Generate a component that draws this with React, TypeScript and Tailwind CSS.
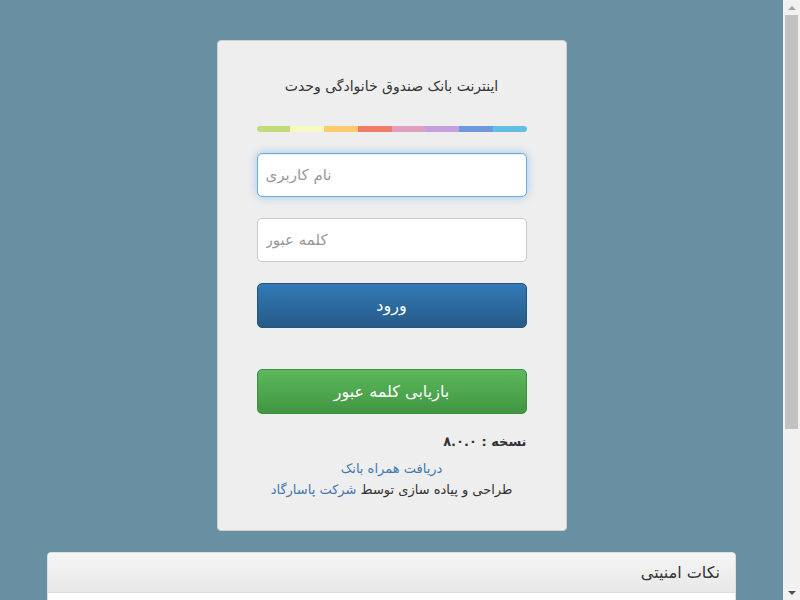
const barColors = [
  "bg-[#c1db7a]",
  "bg-[#f6f7c1]",
  "bg-[#fecb6e]",
  "bg-[#ef7b6b]",
  "bg-[#dfa0c0]",
  "bg-[#c4a0df]",
  "bg-[#6d98dd]",
  "bg-[#62bfe2]",
];

// browser scrollbar as seen in the screenshot
const Scrollbar = () => (
  <div className="flex w-[17px] shrink-0 flex-col bg-[#f1f1f1]">
    <div className="flex h-[15px] items-center justify-center">
      <div className="h-0 w-0 border-x-[4px] border-b-[4px] border-x-transparent border-b-[#a3a3a3]"></div>
    </div>
    <div className="mx-[2px] h-[414px] bg-[#c1c1c1]"></div>
    <div className="flex-1"></div>
    <div className="flex h-[15px] items-center justify-center">
      <div className="h-0 w-0 border-x-[4px] border-t-[4px] border-x-transparent border-t-[#505050]"></div>
    </div>
  </div>
);

const App = () => {
  return (
    <div className="flex h-[600px] overflow-hidden font-['DejaVu_Sans',sans-serif] text-[#333]">
      <div className="flex-1 overflow-hidden bg-[#6890a2] pt-10">
        {/* login card */}
        <div
          dir="rtl"
          className="mx-auto w-[350px] rounded border border-[#cfcfcf] bg-[#eeeeee] px-[39px] pt-[35px] pb-[30px]"
        >
          <h1 className="text-center text-[14px] leading-5">اینترنت بانک صندوق خانوادگی وحدت</h1>

          <div dir="ltr" className="mt-[30px] flex h-[6px] overflow-hidden rounded-full">
            {barColors.map((c) => (
              <div key={c} className={`${c} flex-1`}></div>
            ))}
          </div>

          <input
            dir="ltr"
            autoFocus
            placeholder="نام کاربری"
            className="mt-[21px] block h-[44px] w-full rounded-[5px] border border-[#66afe9] bg-white px-2 text-[15px] outline-none shadow-[inset_0_1px_1px_rgba(0,0,0,0.075),0_0_8px_rgba(102,175,233,0.6)] placeholder:text-[#999]"
          />
          <input
            dir="ltr"
            type="password"
            placeholder="کلمه عبور"
            className="mt-[21px] block h-[44px] w-full rounded-[5px] border border-[#ccc] bg-white px-2 text-[15px] outline-none placeholder:text-[#999]"
          />

          <button className="mt-[21px] block h-[45px] w-full rounded-[5px] border border-[#245580] bg-gradient-to-b from-[#337ab7] to-[#265a88] text-[16px] text-white">
            ورود
          </button>

          <button className="mt-[41px] block h-[45px] w-full rounded-[5px] border border-[#3e8f3e] bg-gradient-to-b from-[#5cb85c] to-[#419641] text-[16px] text-white">
            بازیابی کلمه عبور
          </button>

          <p className="mt-[18px] text-[13px] font-bold leading-5">نسخه : ۸.۰.۰</p>
          <div className="mt-[6px] text-center text-[13px] leading-[21px]">
            <a className="text-[#3f78b3]">دریافت همراه بانک</a>
            <p>
              طراحی و پیاده سازی توسط <a className="text-[#3f78b3]">شرکت پاسارگاد</a>
            </p>
          </div>
        </div>

        {/* security tips panel */}
        <div dir="rtl" className="mx-[47px] mt-[21px] overflow-hidden rounded border border-[#dddddd] bg-white">
          <div className="h-[40px] border-b border-[#dddddd] bg-gradient-to-b from-[#f5f5f5] to-[#e8e8e8] px-[15px] text-[16px] leading-[40px]">
            نکات امنیتی
          </div>
          <div className="h-[200px] px-[15px] py-3 text-[13px]"></div>
        </div>
      </div>
      <Scrollbar />
    </div>
  );
};

export default App;
